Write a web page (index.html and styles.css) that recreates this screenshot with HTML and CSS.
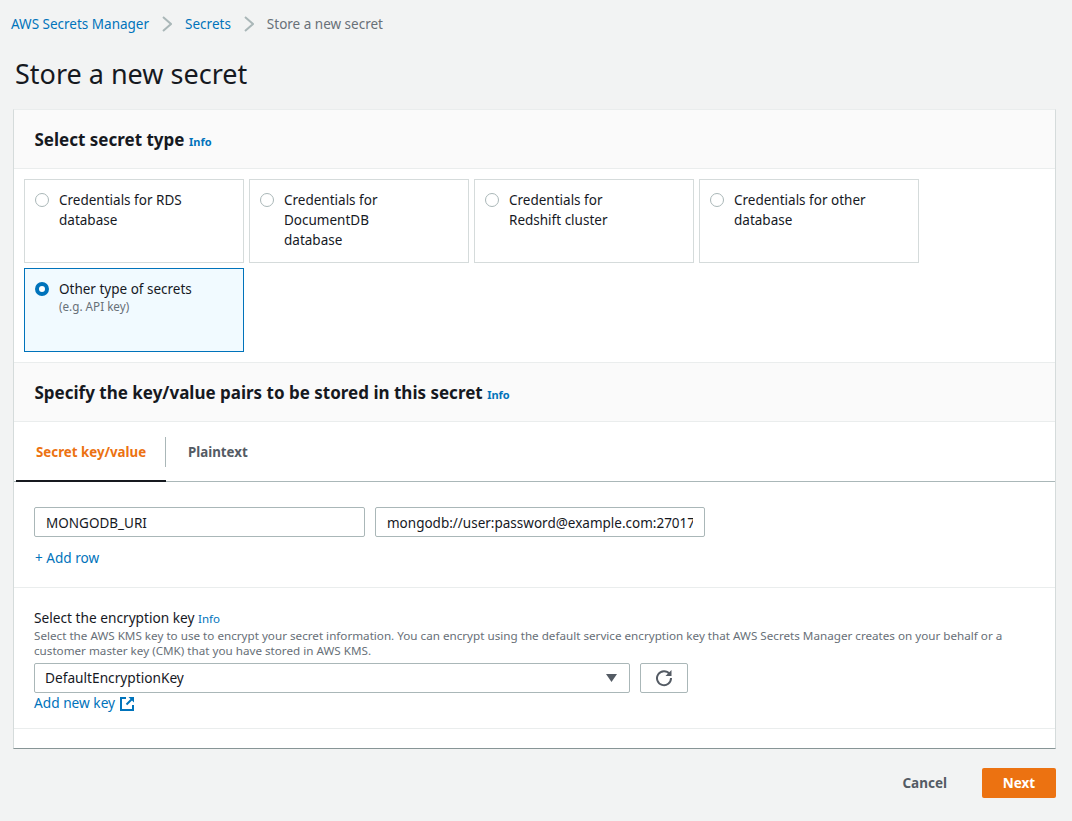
FILE: index.html
```html
<!DOCTYPE html>
<html lang="en">
<head>
  <meta charset="UTF-8">
  <meta name="viewport" content="width=device-width, initial-scale=1">
  <title>Store a new secret</title>
  <link rel="stylesheet" href="styles.css">
</head>
<body>

  <nav class="crumbs">
    <a href="#">AWS Secrets Manager</a>
    <svg class="crumb-sep" width="10" height="16" viewBox="0 0 10 16"><path d="M1 1l8 7-8 7" fill="none" stroke="#aab7b8" stroke-width="2"/></svg>
    <a href="#">Secrets</a>
    <svg class="crumb-sep" width="10" height="16" viewBox="0 0 10 16"><path d="M1 1l8 7-8 7" fill="none" stroke="#aab7b8" stroke-width="2"/></svg>
    <span class="crumb-current">Store a new secret</span>
  </nav>

  <h1>Store a new secret</h1>

  <div class="panel">
    <div class="panel-head">
      <h2>Select secret type</h2> <a class="info" href="#">Info</a>
    </div>

    <div class="types">
      <label class="type">
        <span class="radio"></span>
        <span class="type-text">Credentials for RDS database</span>
      </label>
      <label class="type">
        <span class="radio"></span>
        <span class="type-text">Credentials for DocumentDB database</span>
      </label>
      <label class="type">
        <span class="radio"></span>
        <span class="type-text">Credentials for Redshift cluster</span>
      </label>
      <label class="type">
        <span class="radio"></span>
        <span class="type-text">Credentials for other database</span>
      </label>
      <label class="type selected">
        <span class="radio"></span>
        <span class="type-text">Other type of secrets<small>(e.g. API key)</small></span>
      </label>
    </div>

    <div class="panel-head second">
      <h2>Specify the key/value pairs to be stored in this secret</h2> <a class="info" href="#">Info</a>
    </div>

    <div class="tabs">
      <div class="tab active">Secret key/value</div>
      <div class="tab">Plaintext</div>
    </div>

    <div class="pairs">
      <div class="pair-row">
        <input class="field" type="text" value="MONGODB_URI">
        <input class="field" type="text" value="mongodb://user:password@example.com:27017/db">
      </div>
      <a class="add-row" href="#">+ Add row</a>
    </div>

    <div class="encryption">
      <div class="enc-label">Select the encryption key <a class="info-small" href="#">Info</a></div>
      <p class="enc-help">Select the AWS KMS key to use to encrypt your secret information. You can encrypt using the default service encryption key that AWS Secrets Manager creates on your behalf or a customer master key (CMK) that you have stored in AWS KMS.</p>
      <div class="enc-row">
        <div class="select">
          <span>DefaultEncryptionKey</span>
          <svg width="11" height="8" viewBox="0 0 11 8"><path d="M0 0h11L5.5 8z" fill="#545b64"/></svg>
        </div>
        <button class="refresh">
          <svg width="18" height="18" viewBox="0 0 18 18"><path d="M14.6 5A7 7 0 1 0 16 9" fill="none" stroke="#545b64" stroke-width="2"/><path d="M16.5 1v6h-6z" fill="#545b64"/></svg>
        </button>
      </div>
      <a class="add-key" href="#">Add new key
        <svg width="15" height="15" viewBox="0 0 15 15"><path d="M6 2H1v12h12V9" fill="none" stroke="#0073bb" stroke-width="2"/><path d="M6.5 8.5L13 2" fill="none" stroke="#0073bb" stroke-width="2"/><path d="M8.5 1H14v5.5z" fill="#0073bb"/></svg>
      </a>
    </div>

    <div class="panel-foot"></div>
  </div>

  <div class="actions">
    <button class="btn-link">Cancel</button>
    <button class="btn-primary">Next</button>
  </div>

</body>
</html>
```

FILE: styles.css
```css
* {
  box-sizing: border-box;
}
html, body {
  height: 821px;
  overflow: hidden;
}
body {
  margin: 0;
  padding: 0 16px 0 13px;
  background-color: #f2f3f3;
  color: #16191f;
  font-family: "Noto Sans", Arial, sans-serif;
  font-size: 13.5px;
  line-height: 20px;
}
a {
  color: #0073bb;
  text-decoration: none;
}
.crumbs {
  display: flex;
  align-items: center;
  height: 20px;
  margin: 14px 0 0 -2px;
  font-size: 13.5px;
}
.crumb-sep {
  margin: 0 13px;
}
.crumb-current {
  color: #687078;
}
h1 {
  margin: 23px 0 19px 2px;
  font-size: 27px;
  font-weight: 400;
  line-height: 33px;
}
.panel {
  background: #fff;
  border-left: 1px solid #d5dbdb;
  border-right: 1px solid #d5dbdb;
  border-top: 1px solid #eaeded;
  border-bottom: 1px solid #879596;
  height: 640px;
}
.panel-head {
  height: 59px;
  padding: 19px 20px 0 20.5px;
  background: #fafafa;
  border-bottom: 1px solid #eaeded;
}
.panel-head.second {
  height: 60px;
  border-top: 1px solid #eaeded;
}
h2 {
  display: inline;
  font-size: 17px;
  font-weight: 700;
  line-height: 22px;
}
.info {
  font-size: 11px;
  font-weight: 700;
  margin-left: 1px;
}
.types {
  display: flex;
  flex-wrap: wrap;
  gap: 5px;
  padding: 10px;
}
.type {
  display: flex;
  gap: 10px;
  width: 220px;
  height: 84px;
  padding: 10px;
  border: 1px solid #d5dbdb;
  font-size: 13.5px;
}
.type.selected {
  background: #f1faff;
  border-color: #0073bb;
}
.radio {
  flex: none;
  width: 14px;
  height: 14px;
  margin-top: 3px;
  border: 1px solid #aab7b8;
  border-radius: 50%;
  background: #fff;
}
.selected .radio {
  border: 4px solid #0073bb;
}
.type-text {
  width: 145px;
}
.selected .type-text {
  width: 170px;
}
.type small {
  display: block;
  margin-top: -1px;
  color: #687078;
  font-size: 11.7px;
  line-height: 16px;
}
.tabs {
  display: flex;
  height: 60px;
  padding-left: 2px;
  border-bottom: 1px solid #aab7b8;
}
.tab {
  position: relative;
  height: 60px;
  padding: 20px 20px 0 22px;
  color: #545b64;
  font-size: 13.3px;
  font-weight: 700;
  white-space: nowrap;
}
.tab.active {
  width: 150px;
  color: #ec7211;
  padding-left: 20px;
  border-bottom: 2px solid #16191f;
}
.tab.active::after {
  content: "";
  position: absolute;
  right: 0;
  top: 15px;
  height: 30px;
  border-right: 1px solid #aab7b8;
}
.pairs {
  height: 106px;
  padding: 25px 20px 0;
  border-bottom: 1px solid #eaeded;
}
.pair-row {
  display: flex;
  gap: 10px;
}
.field {
  width: 331px;
  height: 30px;
  padding: 1px 11px 0;
  border: 1px solid #aab7b8;
  border-radius: 2px;
  color: #16191f;
  font-family: inherit;
  font-size: 13.5px;
}
.field + .field {
  width: 330px;
}
.add-row {
  display: block;
  margin: 10px 0 0 1px;
  font-size: 13.6px;
  line-height: 21px;
}
.encryption {
  height: 141px;
  padding: 20px 20px 0;
  border-bottom: 1px solid #eaeded;
}
.enc-label {
  font-size: 13.7px;
  line-height: 19px;
}
.info-small {
  font-size: 11.5px;
}
.enc-help {
  margin: 0;
  color: #687078;
  font-size: 11.66px;
  line-height: 15px;
}
.enc-row {
  display: flex;
  gap: 10px;
  margin-top: 5px;
}
.select {
  display: flex;
  justify-content: space-between;
  align-items: center;
  width: 596px;
  height: 30px;
  padding: 0 12px 0 10px;
  background: #fff;
  border: 1px solid #aab7b8;
  border-radius: 2px;
  font-size: 13.7px;
}
.refresh {
  display: flex;
  align-items: center;
  justify-content: center;
  width: 48px;
  height: 30px;
  padding: 0;
  background: #fff;
  border: 1px solid #aab7b8;
  border-radius: 2px;
}
.add-key {
  display: inline-flex;
  align-items: center;
  gap: 5px;
  font-size: 13.7px;
}
.actions {
  display: flex;
  justify-content: flex-end;
  align-items: center;
  gap: 20px;
  margin-top: 19px;
}
.btn-link {
  padding: 0 15px;
  height: 30px;
  border: none;
  background: none;
  color: #545b64;
  font-family: inherit;
  font-size: 13.5px;
  font-weight: 700;
}
.btn-primary {
  width: 74px;
  height: 30px;
  border: none;
  border-radius: 2px;
  background-color: #ec7211;
  color: #fff;
  font-family: inherit;
  font-size: 13.5px;
  font-weight: 700;
}
```
